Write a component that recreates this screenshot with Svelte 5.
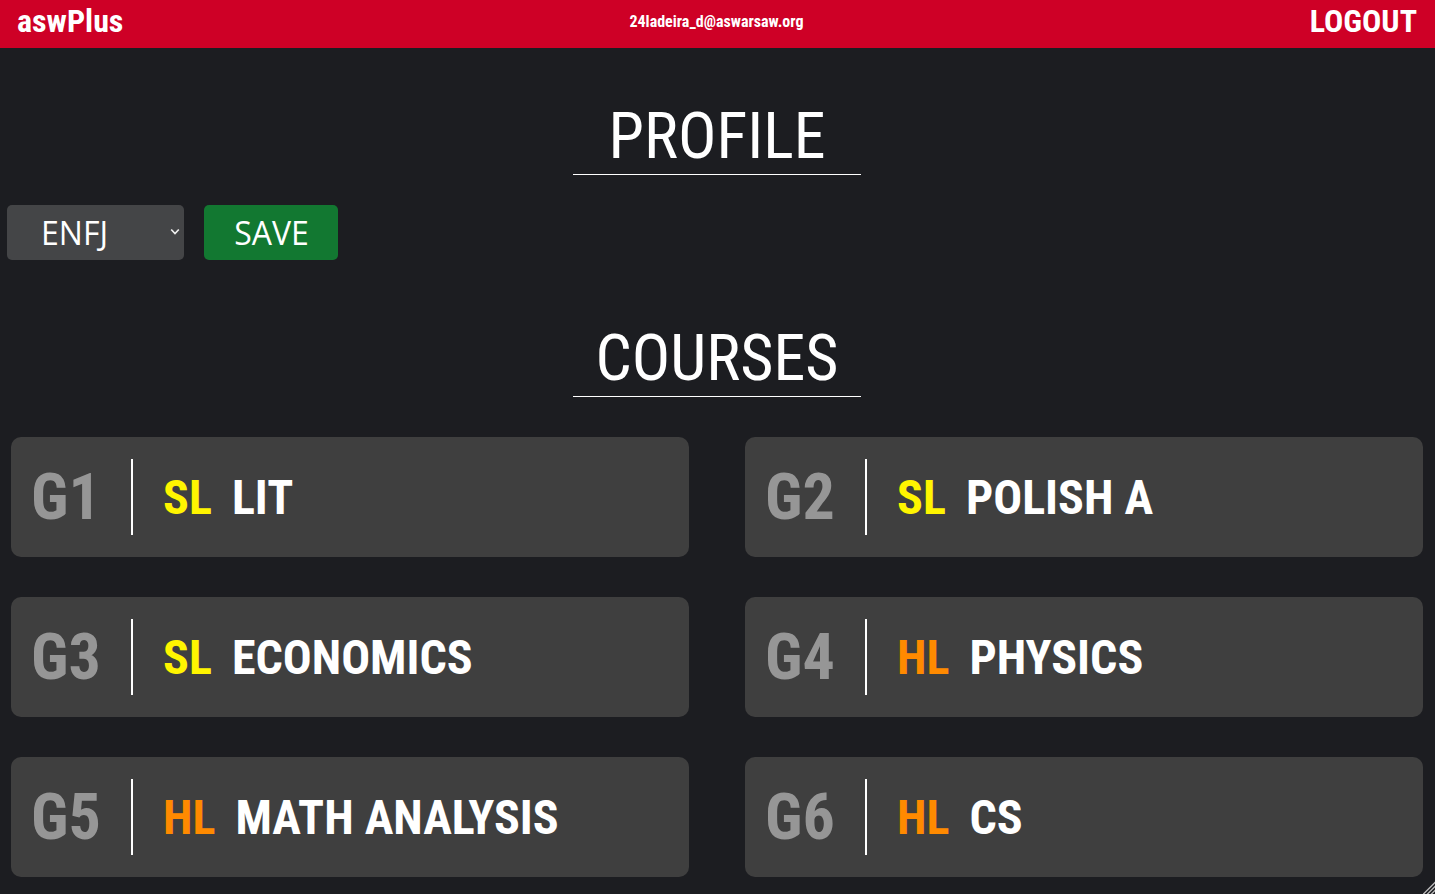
<script>
  const types = ['ENFJ', 'ENFP', 'ENTJ', 'ENTP', 'ESFJ', 'ESFP', 'ESTJ', 'ESTP', 'INFJ', 'INFP', 'INTJ', 'INTP', 'ISFJ', 'ISFP', 'ISTJ', 'ISTP'];
  let selected = $state('ENFJ');
  const courses = [
    { group: 'G1', level: 'SL', name: 'LIT' },
    { group: 'G2', level: 'SL', name: 'POLISH A' },
    { group: 'G3', level: 'SL', name: 'ECONOMICS' },
    { group: 'G4', level: 'HL', name: 'PHYSICS' },
    { group: 'G5', level: 'HL', name: 'MATH ANALYSIS' },
    { group: 'G6', level: 'HL', name: 'CS' }
  ];
</script>

<header>
  <a class="brand" href="#home">aswPlus</a>
  <span class="email">24ladeira_d@aswarsaw.org</span>
  <button class="logout" type="button">LOGOUT</button>
</header>
<main>
  <h1>PROFILE</h1>
  <form onsubmit={(e) => e.preventDefault()}>
    <select aria-label="Personality type" bind:value={selected}>
      {#each types as type}<option>{type}</option>{/each}
    </select>
    <button class="save" type="submit">SAVE</button>
  </form>
  <h1>COURSES</h1>
  <section>
    {#each courses as course}
      <article>
        <span class="group">{course.group}</span>
        <span class="level" class:high={course.level === 'HL'}>{course.level}</span>
        <span class="name">{course.name}</span>
      </article>
    {/each}
  </section>
</main>
<svg class="grip" viewBox="0 0 12 13" aria-hidden="true"><path d="M0 13.5L13 .5M4 13.5L13 4.5M8 13.5L13 8.5" /></svg>

<style>
  :global(body) { margin: 0; background: #1c1d21; }
  header {
    display: grid;
    grid-template-columns: 1fr auto 1fr;
    align-items: center;
    height: 48px;
    padding: 0 18px 6px 16px;
    box-sizing: border-box;
    background: #ce0026;
    color: #fff;
    font: 700 16px "Roboto Condensed", Roboto, sans-serif;
  }
  .brand, .logout { color: inherit; font: inherit; font-size: 32px; text-decoration: none; }
  .brand { padding-left: 1px; }
  .logout { justify-self: end; padding: 0; border: 0; background: none; }
  main { padding-right: 1px; color: #fff; font-family: "Roboto Condensed", Roboto, sans-serif; }
  h1 {
    width: 288px;
    height: 80px;
    box-sizing: border-box;
    margin: 47px auto 0;
    border-bottom: 1px solid #fff;
    text-align: center;
    font-size: 64px;
    line-height: 84px;
    font-weight: 400;
  }
  form { display: flex; gap: 20px; margin: 30px 7px 57px; }
  select, .save {
    height: 55px;
    border: 0;
    border-radius: 5px;
    color: #fff;
    font: 32px "Open Sans", sans-serif;
  }
  select {
    width: 177px;
    padding: 0 0 0 34px;
    appearance: none;
    background: #444547 url("data:image/svg+xml,%3Csvg xmlns='http://www.w3.org/2000/svg' width='10' height='9'%3E%3Cpath d='M1.2 1.5L5 5.6L8.8 1.5' fill='none' stroke='%23eee' stroke-width='1.7'/%3E%3C/svg%3E") no-repeat right 4px center;
  }
  .save { width: 134px; background: #127831; padding: 0 0 0 1px; }
  section { display: grid; grid-template-columns: 1fr 1fr; gap: 40px 56px; padding: 40px 11px 17px 11px; }
  article {
    display: flex;
    align-items: center;
    height: 120px;
    border-radius: 10px;
    background: #3f3f3f;
    font-size: 48px;
    font-weight: 700;
  }
  .group {
    width: 100px;
    height: 76px;
    padding-left: 20px;
    border-right: 2px solid #fff;
    color: #969696;
    font-size: 64px;
    line-height: 78px;
  }
  .level { margin: 0 20px 0 30px; color: #fff500; }
  .high { color: #ff8a00; }
  .grip { position: fixed; right: 0; bottom: 0; width: 12px; height: 13px; stroke: #bbb; stroke-width: 1.3; }
</style>
